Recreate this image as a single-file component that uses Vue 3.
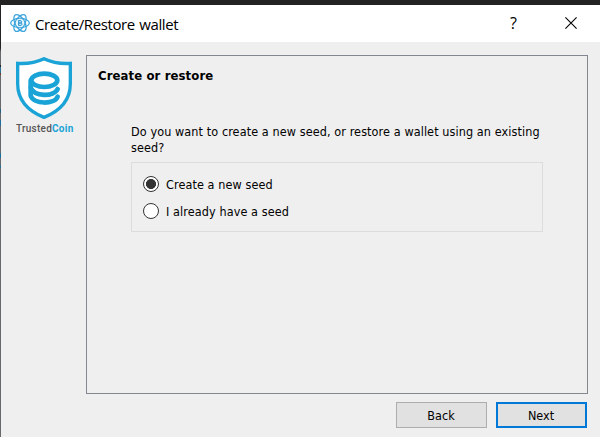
<script setup>
import { ref } from 'vue'

const choice = ref('create')
const options = [
  { id: 'create', label: 'Create a new seed' },
  { id: 'existing', label: 'I already have a seed' },
]
</script>

<template>
  <div class="desktop">
    <div class="window">
      <header class="titlebar">
        <svg class="app-icon" viewBox="0 0 60 60">
          <g fill="none" stroke="#3da5dc" stroke-width="3.8">
            <ellipse cx="30" cy="30" rx="28" ry="14" />
            <ellipse cx="30" cy="30" rx="28" ry="14" transform="rotate(60 30 30)" />
            <ellipse cx="30" cy="30" rx="28" ry="14" transform="rotate(120 30 30)" />
          </g>
          <circle cx="30" cy="30" r="12.500" fill="#e6f4fb" />
          <path d="M26 23v14M30 21v3M30 36v3M25 23h6q4 0 4 3.500t-4 3.500h-4h5q4 0 4 3.500t-4 3.500h-7" fill="none" stroke="#2492d0" stroke-width="3" />
        </svg>
        <h1 class="title">Create/Restore wallet</h1>
        <span class="help">?</span>
        <svg class="close" viewBox="0 0 12 12">
          <path d="M.4.4l11.200 11.200M11.600.4L.4 11.600" stroke="#000" stroke-width="1.100" fill="none" />
        </svg>
      </header>
      <div class="content">
        <aside class="brand">
          <svg class="shield" viewBox="48 36 168 186">
            <path d="M132 41Q96 58 53 55V116C53 167 88 199 132 217C176 199 211 167 211 116V55Q168 58 132 41Z" fill="#fff" stroke="#1aa3d6" stroke-width="10" />
            <g fill="none" stroke="#1aa3d6" stroke-width="14" stroke-linecap="round">
              <ellipse cx="133" cy="106" rx="39" ry="20" />
              <path d="M92 106V152C100 179 164 179 173 155" />
              <path d="M92 128C103 156 162 156 173 132" />
            </g>
          </svg>
          <div class="wordmark">Trusted<span>Coin</span></div>
        </aside>
        <main class="panel">
          <h2>Create or restore</h2>
          <div class="question">
            <p>Do you want to create a new seed, or restore a wallet using an existing<br />seed?</p>
            <div class="group">
              <label v-for="option in options" :key="option.id" :class="option.id">
                <input v-model="choice" type="radio" name="seed" :value="option.id" />
                <span>{{ option.label }}</span>
              </label>
            </div>
          </div>
        </main>
      </div>
      <footer class="actions">
        <button>Back</button>
        <button class="primary">Next</button>
      </footer>
    </div>
  </div>
</template>

<style>
body { margin: 0; overflow: hidden; }
</style>

<style scoped>
* { box-sizing: border-box; }
.desktop {
  width: 600px; height: 437px; padding: 5px 0 0 1px;
  background: linear-gradient(#232323 0 48px, #66696b 52px 65px, #222 65px 67px, #2c6f92 67px 73px, #6b3a2a 73px 75px, #66696b 75px 109px, #245f80 109px 113px, #66696b 113px 120px, #1f6d9c 120px 126px, #66696b 126px 153px, #1f6d9c 153px 158px, #66696b 158px 165px, #2c6f92 165px 168px, #66696b 168px);
  font: 12.500px/16px "DejaVu Sans Condensed", "DejaVu Sans", sans-serif;
  font-stretch: condensed; letter-spacing: .1px; color: #000;
}
.window { height: 432px; background: #efefef; display: flex; flex-direction: column; }
.titlebar { height: 37px; background: #fff; display: flex; align-items: center; padding: 0 23px 0 9px; }
.app-icon { width: 20px; height: 20px; margin-right: 5px; position: relative; top: -1px; }
.title { margin: 0; font: 400 15px/20px "Open Sans", "Noto Sans", sans-serif; font-stretch: normal; letter-spacing: -.4px; word-spacing: 1px; white-space: nowrap; }
.help { margin-left: auto; margin-right: 48px; font: 16px/20px "Open Sans", sans-serif; position: relative; top: -1px; }
.close { width: 12px; height: 12px; position: relative; top: -.500px; }
.content { display: flex; padding: 13px 12px 0 0; height: 352px; }
.brand { width: 85px; display: flex; flex-direction: column; align-items: flex-start; padding: 2px 0 0 15px; }
.shield { width: 56px; height: 62px; }
.wordmark { margin-top: 3px; font: 500 10px/13px Roboto, sans-serif; color: #555; white-space: nowrap; letter-spacing: .25px; }
.wordmark span { color: #1aa3d6; font-weight: 700; }
.panel { flex: 1; height: 339px; border: 1px solid #828790; padding: 12px 44px 0 11px; }
h2 { margin: 0; font-size: 13px; line-height: 16px; font-weight: 700; white-space: nowrap; }
.question { padding: 40px 0 0 33px; }
p { margin: 0; white-space: nowrap; }
.group { margin-top: 6px; height: 70px; border: 1px solid #dcdcdc; padding: 13px 11px; display: flex; flex-direction: column; gap: 11px; }
label { display: flex; align-items: center; height: 16px; white-space: nowrap; }
label span { padding-top: 1px; }
input { appearance: none; width: 16px; height: 16px; margin: 0 7px 0 0; border: 1px solid #333; border-radius: 50%; background: #fff; }
input:checked { background: radial-gradient(circle, #333 0 4.700px, #fff 5.300px); }
.actions { display: flex; justify-content: flex-end; gap: 9px; padding: 8px 13px 0 0; }
button { width: 91px; height: 26px; padding: 1px 1px 0 0; font: inherit; color: #000; background: #e1e1e1; border: 1px solid #adadad; border-radius: 0; }
.primary { border: 2px solid #0078d7; }
</style>
